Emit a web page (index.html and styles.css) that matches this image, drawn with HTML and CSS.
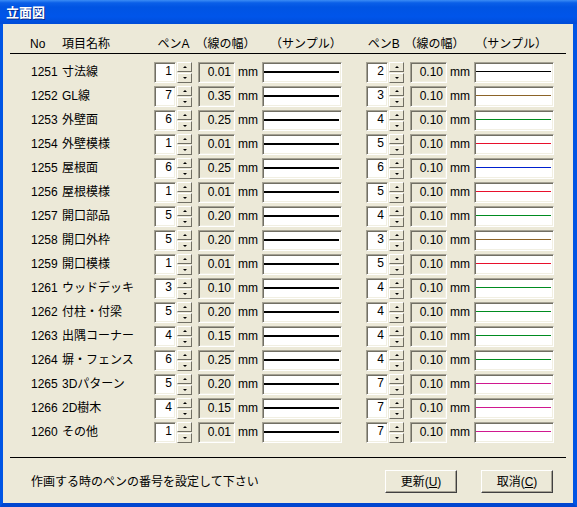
FILE: index.html
```html
<!DOCTYPE html>
<html lang="ja">
<head>
<meta charset="utf-8">
<title>立面図</title>
<link rel="stylesheet" href="styles.css">
</head>
<body>
<div class="window">
  <div class="titlebar"><span class="title">立面図</span></div>
  <div class="client">
    <div class="header">
      <span class="h-no">No</span>
      <span class="h-name">項目名称</span>
      <span class="h-pen">ペンA</span>
      <span class="h-width">（線の幅）</span>
      <span class="h-sample">（サンプル）</span>
      <span class="h-pen h-pen-b">ペンB</span>
      <span class="h-width h-width-b">（線の幅）</span>
      <span class="h-sample">（サンプル）</span>
    </div>
    <div class="rule"></div>
    <div class="rows">
      <div class="row"><span class="no">1251</span><span class="name">寸法線</span>
        <div class="pen"><div class="edit sunken">1</div><div class="spin"><div class="sbtn"><i class="up"></i></div><div class="sbtn"><i class="down"></i></div></div><div class="width sunken">0.01</div><span class="mm">mm</span><div class="sample sunken"><div class="line line-a"></div></div></div>
        <div class="pen pen-b"><div class="edit sunken">2</div><div class="spin"><div class="sbtn"><i class="up"></i></div><div class="sbtn"><i class="down"></i></div></div><div class="width sunken">0.10</div><span class="mm">mm</span><div class="sample sunken"><div class="line c-black"></div></div></div>
      </div>
      <div class="row"><span class="no">1252</span><span class="name">GL線</span>
        <div class="pen"><div class="edit sunken">7</div><div class="spin"><div class="sbtn"><i class="up"></i></div><div class="sbtn"><i class="down"></i></div></div><div class="width sunken">0.35</div><span class="mm">mm</span><div class="sample sunken"><div class="line line-a"></div></div></div>
        <div class="pen pen-b"><div class="edit sunken">3</div><div class="spin"><div class="sbtn"><i class="up"></i></div><div class="sbtn"><i class="down"></i></div></div><div class="width sunken">0.10</div><span class="mm">mm</span><div class="sample sunken"><div class="line c-brown"></div></div></div>
      </div>
      <div class="row"><span class="no">1253</span><span class="name">外壁面</span>
        <div class="pen"><div class="edit sunken">6</div><div class="spin"><div class="sbtn"><i class="up"></i></div><div class="sbtn"><i class="down"></i></div></div><div class="width sunken">0.25</div><span class="mm">mm</span><div class="sample sunken"><div class="line line-a"></div></div></div>
        <div class="pen pen-b"><div class="edit sunken">4</div><div class="spin"><div class="sbtn"><i class="up"></i></div><div class="sbtn"><i class="down"></i></div></div><div class="width sunken">0.10</div><span class="mm">mm</span><div class="sample sunken"><div class="line c-green"></div></div></div>
      </div>
      <div class="row"><span class="no">1254</span><span class="name">外壁模様</span>
        <div class="pen"><div class="edit sunken">1</div><div class="spin"><div class="sbtn"><i class="up"></i></div><div class="sbtn"><i class="down"></i></div></div><div class="width sunken">0.01</div><span class="mm">mm</span><div class="sample sunken"><div class="line line-a"></div></div></div>
        <div class="pen pen-b"><div class="edit sunken">5</div><div class="spin"><div class="sbtn"><i class="up"></i></div><div class="sbtn"><i class="down"></i></div></div><div class="width sunken">0.10</div><span class="mm">mm</span><div class="sample sunken"><div class="line c-red"></div></div></div>
      </div>
      <div class="row"><span class="no">1255</span><span class="name">屋根面</span>
        <div class="pen"><div class="edit sunken">6</div><div class="spin"><div class="sbtn"><i class="up"></i></div><div class="sbtn"><i class="down"></i></div></div><div class="width sunken">0.25</div><span class="mm">mm</span><div class="sample sunken"><div class="line line-a"></div></div></div>
        <div class="pen pen-b"><div class="edit sunken">6</div><div class="spin"><div class="sbtn"><i class="up"></i></div><div class="sbtn"><i class="down"></i></div></div><div class="width sunken">0.10</div><span class="mm">mm</span><div class="sample sunken"><div class="line c-blue"></div></div></div>
      </div>
      <div class="row"><span class="no">1256</span><span class="name">屋根模様</span>
        <div class="pen"><div class="edit sunken">1</div><div class="spin"><div class="sbtn"><i class="up"></i></div><div class="sbtn"><i class="down"></i></div></div><div class="width sunken">0.01</div><span class="mm">mm</span><div class="sample sunken"><div class="line line-a"></div></div></div>
        <div class="pen pen-b"><div class="edit sunken">5</div><div class="spin"><div class="sbtn"><i class="up"></i></div><div class="sbtn"><i class="down"></i></div></div><div class="width sunken">0.10</div><span class="mm">mm</span><div class="sample sunken"><div class="line c-red"></div></div></div>
      </div>
      <div class="row"><span class="no">1257</span><span class="name">開口部品</span>
        <div class="pen"><div class="edit sunken">5</div><div class="spin"><div class="sbtn"><i class="up"></i></div><div class="sbtn"><i class="down"></i></div></div><div class="width sunken">0.20</div><span class="mm">mm</span><div class="sample sunken"><div class="line line-a"></div></div></div>
        <div class="pen pen-b"><div class="edit sunken">4</div><div class="spin"><div class="sbtn"><i class="up"></i></div><div class="sbtn"><i class="down"></i></div></div><div class="width sunken">0.10</div><span class="mm">mm</span><div class="sample sunken"><div class="line c-green"></div></div></div>
      </div>
      <div class="row"><span class="no">1258</span><span class="name">開口外枠</span>
        <div class="pen"><div class="edit sunken">5</div><div class="spin"><div class="sbtn"><i class="up"></i></div><div class="sbtn"><i class="down"></i></div></div><div class="width sunken">0.20</div><span class="mm">mm</span><div class="sample sunken"><div class="line line-a"></div></div></div>
        <div class="pen pen-b"><div class="edit sunken">3</div><div class="spin"><div class="sbtn"><i class="up"></i></div><div class="sbtn"><i class="down"></i></div></div><div class="width sunken">0.10</div><span class="mm">mm</span><div class="sample sunken"><div class="line c-brown"></div></div></div>
      </div>
      <div class="row"><span class="no">1259</span><span class="name">開口模様</span>
        <div class="pen"><div class="edit sunken">1</div><div class="spin"><div class="sbtn"><i class="up"></i></div><div class="sbtn"><i class="down"></i></div></div><div class="width sunken">0.01</div><span class="mm">mm</span><div class="sample sunken"><div class="line line-a"></div></div></div>
        <div class="pen pen-b"><div class="edit sunken">5</div><div class="spin"><div class="sbtn"><i class="up"></i></div><div class="sbtn"><i class="down"></i></div></div><div class="width sunken">0.10</div><span class="mm">mm</span><div class="sample sunken"><div class="line c-red"></div></div></div>
      </div>
      <div class="row"><span class="no">1261</span><span class="name">ウッドデッキ</span>
        <div class="pen"><div class="edit sunken">3</div><div class="spin"><div class="sbtn"><i class="up"></i></div><div class="sbtn"><i class="down"></i></div></div><div class="width sunken">0.10</div><span class="mm">mm</span><div class="sample sunken"><div class="line line-a"></div></div></div>
        <div class="pen pen-b"><div class="edit sunken">4</div><div class="spin"><div class="sbtn"><i class="up"></i></div><div class="sbtn"><i class="down"></i></div></div><div class="width sunken">0.10</div><span class="mm">mm</span><div class="sample sunken"><div class="line c-green"></div></div></div>
      </div>
      <div class="row"><span class="no">1262</span><span class="name">付柱・付梁</span>
        <div class="pen"><div class="edit sunken">5</div><div class="spin"><div class="sbtn"><i class="up"></i></div><div class="sbtn"><i class="down"></i></div></div><div class="width sunken">0.20</div><span class="mm">mm</span><div class="sample sunken"><div class="line line-a"></div></div></div>
        <div class="pen pen-b"><div class="edit sunken">4</div><div class="spin"><div class="sbtn"><i class="up"></i></div><div class="sbtn"><i class="down"></i></div></div><div class="width sunken">0.10</div><span class="mm">mm</span><div class="sample sunken"><div class="line c-green"></div></div></div>
      </div>
      <div class="row"><span class="no">1263</span><span class="name">出隅コーナー</span>
        <div class="pen"><div class="edit sunken">4</div><div class="spin"><div class="sbtn"><i class="up"></i></div><div class="sbtn"><i class="down"></i></div></div><div class="width sunken">0.15</div><span class="mm">mm</span><div class="sample sunken"><div class="line line-a"></div></div></div>
        <div class="pen pen-b"><div class="edit sunken">4</div><div class="spin"><div class="sbtn"><i class="up"></i></div><div class="sbtn"><i class="down"></i></div></div><div class="width sunken">0.10</div><span class="mm">mm</span><div class="sample sunken"><div class="line c-green"></div></div></div>
      </div>
      <div class="row"><span class="no">1264</span><span class="name">塀・フェンス</span>
        <div class="pen"><div class="edit sunken">6</div><div class="spin"><div class="sbtn"><i class="up"></i></div><div class="sbtn"><i class="down"></i></div></div><div class="width sunken">0.25</div><span class="mm">mm</span><div class="sample sunken"><div class="line line-a"></div></div></div>
        <div class="pen pen-b"><div class="edit sunken">4</div><div class="spin"><div class="sbtn"><i class="up"></i></div><div class="sbtn"><i class="down"></i></div></div><div class="width sunken">0.10</div><span class="mm">mm</span><div class="sample sunken"><div class="line c-green"></div></div></div>
      </div>
      <div class="row"><span class="no">1265</span><span class="name">3Dパターン</span>
        <div class="pen"><div class="edit sunken">5</div><div class="spin"><div class="sbtn"><i class="up"></i></div><div class="sbtn"><i class="down"></i></div></div><div class="width sunken">0.20</div><span class="mm">mm</span><div class="sample sunken"><div class="line line-a"></div></div></div>
        <div class="pen pen-b"><div class="edit sunken">7</div><div class="spin"><div class="sbtn"><i class="up"></i></div><div class="sbtn"><i class="down"></i></div></div><div class="width sunken">0.10</div><span class="mm">mm</span><div class="sample sunken"><div class="line c-magenta"></div></div></div>
      </div>
      <div class="row"><span class="no">1266</span><span class="name">2D樹木</span>
        <div class="pen"><div class="edit sunken">4</div><div class="spin"><div class="sbtn"><i class="up"></i></div><div class="sbtn"><i class="down"></i></div></div><div class="width sunken">0.15</div><span class="mm">mm</span><div class="sample sunken"><div class="line line-a"></div></div></div>
        <div class="pen pen-b"><div class="edit sunken">7</div><div class="spin"><div class="sbtn"><i class="up"></i></div><div class="sbtn"><i class="down"></i></div></div><div class="width sunken">0.10</div><span class="mm">mm</span><div class="sample sunken"><div class="line c-magenta"></div></div></div>
      </div>
      <div class="row"><span class="no">1260</span><span class="name">その他</span>
        <div class="pen"><div class="edit sunken">1</div><div class="spin"><div class="sbtn"><i class="up"></i></div><div class="sbtn"><i class="down"></i></div></div><div class="width sunken">0.01</div><span class="mm">mm</span><div class="sample sunken"><div class="line line-a"></div></div></div>
        <div class="pen pen-b"><div class="edit sunken">7</div><div class="spin"><div class="sbtn"><i class="up"></i></div><div class="sbtn"><i class="down"></i></div></div><div class="width sunken">0.10</div><span class="mm">mm</span><div class="sample sunken"><div class="line c-magenta"></div></div></div>
      </div>
    </div>
    <div class="rule rule-bottom"></div>
    <div class="footer">
      <span class="msg">作画する時のペンの番号を設定して下さい</span>
      <button class="btn">更新(<u>U</u>)</button>
      <button class="btn btn-cancel">取消(<u>C</u>)</button>
    </div>
  </div>
</div>
</body>
</html>
```

FILE: styles.css
```css
* { box-sizing: border-box; }
html, body { margin: 0; padding: 0; }
body {
  width: 577px;
  height: 507px;
  overflow: hidden;
  background: #ECE9D8;
  font-family: "Liberation Sans", "Noto Sans CJK JP", sans-serif;
  font-size: 12px;
  color: #000;
}
.window {
  width: 577px;
  height: 507px;
  display: flex;
  flex-direction: column;
}
.titlebar {
  flex: none;
  height: 24px;
  display: flex;
  align-items: center;
  padding-left: 6px;
  background: linear-gradient(to bottom, #3b8cf5 0%, #0a5fe8 12%, #0054e3 30%, #0055ea 70%, #004cd8 100%);
}
.title {
  color: #fff;
  font-family: "Noto Sans CJK JP", sans-serif;
  font-weight: bold;
  font-size: 13px;
  line-height: 16px;
  text-shadow: 1px 1px 0 #0a2a8a;
}
.client {
  flex: 1;
  display: flex;
  flex-direction: column;
  background: #ECE9D8;
  border-left: 3px solid #0055e5;
  border-right: 4px solid #0055e5;
  border-bottom: 4px solid #0046d0;
}
.header {
  display: flex;
  padding: 12px 0 0 27px;
  line-height: 16px;
  white-space: nowrap;
}
.h-no { width: 32px; }
.h-name { width: 96px; }
.h-pen { width: 38px; }
.h-width { width: 75px; }
.h-sample { width: 98px; }
.h-pen-b { width: 37px; }
.h-width-b { width: 71px; }
.rule {
  height: 1px;
  background: #000;
  margin: 1px 7px 0 7px;
}
.rows {
  padding: 8px 0 0 28px;
}
.row {
  display: flex;
  align-items: flex-start;
  height: 24px;
}
.no { width: 31px; line-height: 21px; }
.name { width: 92px; line-height: 21px; white-space: nowrap; }
.pen {
  display: flex;
  align-items: flex-start;
}
.pen-b { margin-left: 24px; }
.sunken {
  border: 1px solid;
  border-color: #a5a294 #ffffff #ffffff #a5a294;
  box-shadow: inset 1px 1px 0 #716f64, inset -1px -1px 0 #f1efe2;
}
.edit {
  width: 22px;
  height: 21px;
  background: #fff;
  text-align: right;
  padding-right: 3px;
  line-height: 16px;
}
.spin {
  margin-left: 1px;
  width: 15px;
  height: 21px;
  display: flex;
  flex-direction: column;
  justify-content: space-between;
}
.sbtn {
  height: 10px;
  background: #ECE9D8;
  border: 1px solid;
  border-color: #ffffff #716f64 #716f64 #ffffff;
  display: flex;
  align-items: center;
  justify-content: center;
}
.up, .down {
  display: block;
  width: 0;
  height: 0;
  border-left: 2px solid transparent;
  border-right: 2px solid transparent;
}
.up { border-bottom: 2px solid #000; }
.down { border-top: 2px solid #000; }
.width {
  margin-left: 6px;
  width: 37px;
  height: 21px;
  background: #ECE9D8;
  text-align: right;
  padding-right: 3px;
  line-height: 18px;
}
.mm {
  margin-left: 3px;
  width: 24px;
  line-height: 21px;
}
.sample {
  width: 80px;
  height: 21px;
  background: #fff;
}
.line {
  height: 1px;
  margin: 8px 2px 0 1px;
  border-top: 1px solid #000;
}
.line-a { height: 2px; border-top-width: 2px; }
.c-black { border-top-color: #000000; }
.c-brown { border-top-color: #8c6428; }
.c-green { border-top-color: #008c20; }
.c-red { border-top-color: #e8102c; }
.c-blue { border-top-color: #0020d0; }
.c-magenta { border-top-color: #d01890; }
.rule-bottom { margin-top: 11px; }
.footer {
  display: flex;
  align-items: center;
  padding: 12px 20px 0 28px;
}
.msg {
  flex: 1;
  line-height: 16px;
  white-space: nowrap;
}
.btn {
  width: 72px;
  height: 23px;
  padding: 0;
  font-family: "Liberation Sans", "Noto Sans CJK JP", sans-serif;
  font-size: 12px;
  color: #000;
  background: #ECE9D8;
  border: 1px solid;
  border-color: #ffffff #404040 #404040 #ffffff;
  box-shadow: inset -1px -1px 0 #a5a294;
  line-height: 16px;
}
.btn-cancel { margin-left: 24px; }
```
